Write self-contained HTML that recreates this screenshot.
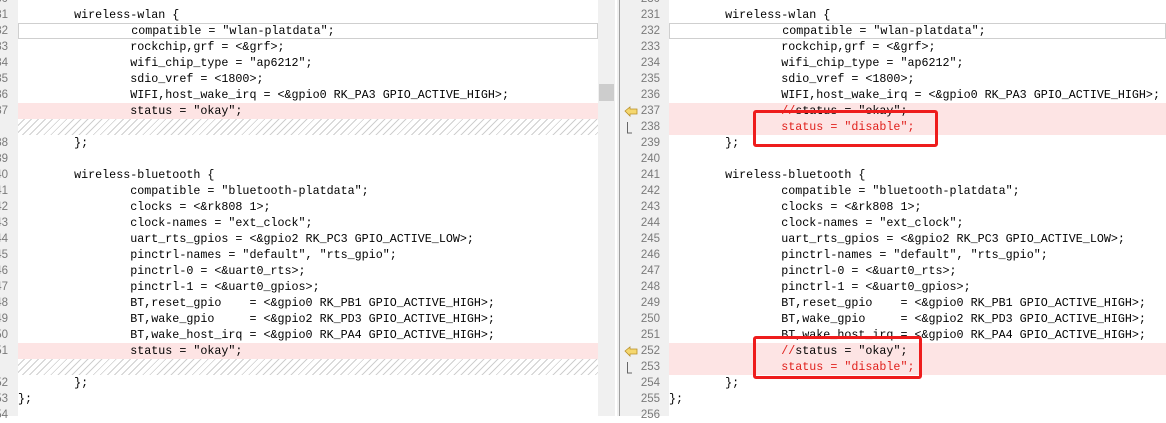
<!DOCTYPE html>
<html><head><meta charset="utf-8"><style>
*{margin:0;padding:0;box-sizing:border-box}
body{width:1166px;height:416px;overflow:hidden;background:#fff;position:relative;font-family:"Liberation Mono",monospace;font-size:11.7px;color:#000}
.pane{position:absolute;top:0;height:416px;overflow:hidden}
.r{position:absolute;left:0;right:0;height:16px;line-height:16px;white-space:pre}
.del{background:#fde4e4}
.hatch{background:repeating-linear-gradient(135deg,#fff 0 4px,#cfcfcf 4px 5px)}
.cur{border:1px solid #cfcfcf;line-height:14px}
.n{position:absolute;font-family:"Liberation Sans",sans-serif;font-size:11.5px;color:#7a7a7a;text-align:right;line-height:16px;height:16px}
.red{color:#e0201c}
.box{position:absolute;border:3px solid #ee1c1c;border-radius:3px}
</style></head><body>
<div style="position:absolute;left:0;top:0;width:18px;height:416px;background:#f0f0f0"></div>
<div class="pane" style="left:18px;width:580px">
<div class="r" style="top:7px">        wireless-wlan {</div>
<div class="r cur" style="top:23px">                compatible = "wlan-platdata";</div>
<div class="r" style="top:39px">                rockchip,grf = &lt;&amp;grf&gt;;</div>
<div class="r" style="top:55px">                wifi_chip_type = "ap6212";</div>
<div class="r" style="top:71px">                sdio_vref = &lt;1800&gt;;</div>
<div class="r" style="top:87px">                WIFI,host_wake_irq = &lt;&amp;gpio0 RK_PA3 GPIO_ACTIVE_HIGH&gt;;</div>
<div class="r del" style="top:103px">                status = "okay";</div>
<div class="r hatch" style="top:119px"></div>
<div class="r" style="top:135px">        };</div>
<div class="r" style="top:167px">        wireless-bluetooth {</div>
<div class="r" style="top:183px">                compatible = "bluetooth-platdata";</div>
<div class="r" style="top:199px">                clocks = &lt;&amp;rk808 1&gt;;</div>
<div class="r" style="top:215px">                clock-names = "ext_clock";</div>
<div class="r" style="top:231px">                uart_rts_gpios = &lt;&amp;gpio2 RK_PC3 GPIO_ACTIVE_LOW&gt;;</div>
<div class="r" style="top:247px">                pinctrl-names = "default", "rts_gpio";</div>
<div class="r" style="top:263px">                pinctrl-0 = &lt;&amp;uart0_rts&gt;;</div>
<div class="r" style="top:279px">                pinctrl-1 = &lt;&amp;uart0_gpios&gt;;</div>
<div class="r" style="top:295px">                BT,reset_gpio    = &lt;&amp;gpio0 RK_PB1 GPIO_ACTIVE_HIGH&gt;;</div>
<div class="r" style="top:311px">                BT,wake_gpio     = &lt;&amp;gpio2 RK_PD3 GPIO_ACTIVE_HIGH&gt;;</div>
<div class="r" style="top:327px">                BT,wake_host_irq = &lt;&amp;gpio0 RK_PA4 GPIO_ACTIVE_HIGH&gt;;</div>
<div class="r del" style="top:343px">                status = "okay";</div>
<div class="r hatch" style="top:359px"></div>
<div class="r" style="top:375px">        };</div>
<div class="r" style="top:391px">};</div>
</div>
<div class="n" style="left:-12px;width:20px;top:-9px">30</div>
<div class="n" style="left:-12px;width:20px;top:7px">31</div>
<div class="n" style="left:-12px;width:20px;top:23px">32</div>
<div class="n" style="left:-12px;width:20px;top:39px">33</div>
<div class="n" style="left:-12px;width:20px;top:55px">34</div>
<div class="n" style="left:-12px;width:20px;top:71px">35</div>
<div class="n" style="left:-12px;width:20px;top:87px">36</div>
<div class="n" style="left:-12px;width:20px;top:103px">37</div>
<div class="n" style="left:-12px;width:20px;top:135px">38</div>
<div class="n" style="left:-12px;width:20px;top:151px">39</div>
<div class="n" style="left:-12px;width:20px;top:167px">40</div>
<div class="n" style="left:-12px;width:20px;top:183px">41</div>
<div class="n" style="left:-12px;width:20px;top:199px">42</div>
<div class="n" style="left:-12px;width:20px;top:215px">43</div>
<div class="n" style="left:-12px;width:20px;top:231px">44</div>
<div class="n" style="left:-12px;width:20px;top:247px">45</div>
<div class="n" style="left:-12px;width:20px;top:263px">46</div>
<div class="n" style="left:-12px;width:20px;top:279px">47</div>
<div class="n" style="left:-12px;width:20px;top:295px">48</div>
<div class="n" style="left:-12px;width:20px;top:311px">49</div>
<div class="n" style="left:-12px;width:20px;top:327px">50</div>
<div class="n" style="left:-12px;width:20px;top:343px">51</div>
<div class="n" style="left:-12px;width:20px;top:375px">52</div>
<div class="n" style="left:-12px;width:20px;top:391px">53</div>
<div class="n" style="left:-12px;width:20px;top:407px">54</div>
<div style="position:absolute;left:598px;top:0;width:17px;height:416px;background:#f0f0f0"></div>
<div style="position:absolute;left:599px;top:84px;width:15px;height:17px;background:#cdcdcd"></div>
<div style="position:absolute;left:615px;top:0;width:2px;height:416px;background:#fff"></div>
<div style="position:absolute;left:617px;top:0;width:52px;height:416px;background:#f0f0f0"></div>
<div style="position:absolute;left:619px;top:0;width:1px;height:416px;background:#a0a0a0"></div>
<div class="pane" style="left:669px;width:497px">
<div class="r" style="top:7px">        wireless-wlan {</div>
<div class="r cur" style="top:23px">                compatible = "wlan-platdata";</div>
<div class="r" style="top:39px">                rockchip,grf = &lt;&amp;grf&gt;;</div>
<div class="r" style="top:55px">                wifi_chip_type = "ap6212";</div>
<div class="r" style="top:71px">                sdio_vref = &lt;1800&gt;;</div>
<div class="r" style="top:87px">                WIFI,host_wake_irq = &lt;&amp;gpio0 RK_PA3 GPIO_ACTIVE_HIGH&gt;;</div>
<div class="r del" style="top:103px">                <span class="red">//</span>status = "okay";</div>
<div class="r del red" style="top:119px">                status = "disable";</div>
<div class="r" style="top:135px">        };</div>
<div class="r" style="top:167px">        wireless-bluetooth {</div>
<div class="r" style="top:183px">                compatible = "bluetooth-platdata";</div>
<div class="r" style="top:199px">                clocks = &lt;&amp;rk808 1&gt;;</div>
<div class="r" style="top:215px">                clock-names = "ext_clock";</div>
<div class="r" style="top:231px">                uart_rts_gpios = &lt;&amp;gpio2 RK_PC3 GPIO_ACTIVE_LOW&gt;;</div>
<div class="r" style="top:247px">                pinctrl-names = "default", "rts_gpio";</div>
<div class="r" style="top:263px">                pinctrl-0 = &lt;&amp;uart0_rts&gt;;</div>
<div class="r" style="top:279px">                pinctrl-1 = &lt;&amp;uart0_gpios&gt;;</div>
<div class="r" style="top:295px">                BT,reset_gpio    = &lt;&amp;gpio0 RK_PB1 GPIO_ACTIVE_HIGH&gt;;</div>
<div class="r" style="top:311px">                BT,wake_gpio     = &lt;&amp;gpio2 RK_PD3 GPIO_ACTIVE_HIGH&gt;;</div>
<div class="r" style="top:327px">                BT,wake_host_irq = &lt;&amp;gpio0 RK_PA4 GPIO_ACTIVE_HIGH&gt;;</div>
<div class="r del" style="top:343px">                <span class="red">//</span>status = "okay";</div>
<div class="r del red" style="top:359px">                status = "disable";</div>
<div class="r" style="top:375px">        };</div>
<div class="r" style="top:391px">};</div>
</div>
<div class="n" style="left:630px;width:30px;top:-9px">230</div>
<div class="n" style="left:630px;width:30px;top:7px">231</div>
<div class="n" style="left:630px;width:30px;top:23px">232</div>
<div class="n" style="left:630px;width:30px;top:39px">233</div>
<div class="n" style="left:630px;width:30px;top:55px">234</div>
<div class="n" style="left:630px;width:30px;top:71px">235</div>
<div class="n" style="left:630px;width:30px;top:87px">236</div>
<div class="n" style="left:630px;width:30px;top:103px">237</div>
<div class="n" style="left:630px;width:30px;top:119px">238</div>
<div class="n" style="left:630px;width:30px;top:135px">239</div>
<div class="n" style="left:630px;width:30px;top:151px">240</div>
<div class="n" style="left:630px;width:30px;top:167px">241</div>
<div class="n" style="left:630px;width:30px;top:183px">242</div>
<div class="n" style="left:630px;width:30px;top:199px">243</div>
<div class="n" style="left:630px;width:30px;top:215px">244</div>
<div class="n" style="left:630px;width:30px;top:231px">245</div>
<div class="n" style="left:630px;width:30px;top:247px">246</div>
<div class="n" style="left:630px;width:30px;top:263px">247</div>
<div class="n" style="left:630px;width:30px;top:279px">248</div>
<div class="n" style="left:630px;width:30px;top:295px">249</div>
<div class="n" style="left:630px;width:30px;top:311px">250</div>
<div class="n" style="left:630px;width:30px;top:327px">251</div>
<div class="n" style="left:630px;width:30px;top:343px">252</div>
<div class="n" style="left:630px;width:30px;top:359px">253</div>
<div class="n" style="left:630px;width:30px;top:375px">254</div>
<div class="n" style="left:630px;width:30px;top:391px">255</div>
<div class="n" style="left:630px;width:30px;top:407px">256</div>
<svg style="position:absolute;left:624px;top:105px" width="14" height="30"><path d="M1 6 L6 2 L6 4 L13 4 L13 9 L6 9 L6 11 Z" fill="#f5d76e" stroke="#b8902a" stroke-width="0.8"/><path d="M3.5 17 V28 H8" fill="none" stroke="#666" stroke-width="1"/></svg>
<svg style="position:absolute;left:624px;top:345px" width="14" height="30"><path d="M1 6 L6 2 L6 4 L13 4 L13 9 L6 9 L6 11 Z" fill="#f5d76e" stroke="#b8902a" stroke-width="0.8"/><path d="M3.5 17 V28 H8" fill="none" stroke="#666" stroke-width="1"/></svg>
<div class="box" style="left:753px;top:110px;width:185px;height:37px"></div>
<div class="box" style="left:753px;top:336px;width:169px;height:43px"></div>
</body></html>
